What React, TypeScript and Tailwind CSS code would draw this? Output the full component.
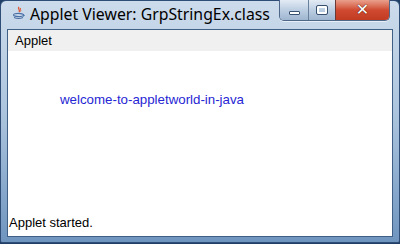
export default function App() {
  return (
    <div className="w-[400px] h-[244px] overflow-hidden bg-[#1f3f66]">
      <div className="w-[400px] h-[243px] flex flex-col rounded-t-[6px] rounded-b-[2px] border border-[#2f4d76] bg-gradient-to-b from-[#cddcec] via-[#a9c2dc] to-[#6f95bf]">
        {/* title bar */}
        <div className="h-[28px] flex items-start relative">
          <div className="ml-[11px] mt-[5px] w-[14px] h-[14px] flex items-center justify-center">
            <svg width="14" height="14" viewBox="0 0 14 14">
              <path d="M7 1 C5 3 9 4 7 6" stroke="#e0502a" strokeWidth="1.3" fill="none" />
              <path d="M8.5 2 C7.5 3.5 9.5 4 8.5 5.5" stroke="#e0502a" strokeWidth="1" fill="none" />
              <ellipse cx="6.5" cy="9" rx="5" ry="1.6" fill="none" stroke="#4a6fa5" strokeWidth="1.1" />
              <path d="M2 11.5 Q6.5 13.5 11 11.5" stroke="#4a6fa5" strokeWidth="1.1" fill="none" />
              <path d="M11 8.5 Q13.5 9 11.5 10.5" stroke="#4a6fa5" strokeWidth="1" fill="none" />
            </svg>
          </div>
          <div className="ml-[4px] mt-[2px] text-[15.8px] leading-[22px] text-black font-['Noto_Sans',sans-serif]">
            Applet Viewer: GrpStringEx.class
          </div>
          <div className="absolute right-[9px] top-[-1px] flex h-[21px] rounded-b-[5px] border border-[#4f6788] border-t-0 overflow-hidden shadow-[0_1px_0_#e6eef7]">
            <div className="w-[29px] h-full flex items-center justify-center bg-gradient-to-b from-[#e3ebf4] via-[#bccee2] to-[#9fb6d0] border-r border-[#6a819e]">
              <div className="mt-[6px] w-[11px] h-[4px] bg-white border border-[#37506f] rounded-[1px]" />
            </div>
            <div className="w-[27px] h-full flex items-center justify-center bg-gradient-to-b from-[#e3ebf4] via-[#bccee2] to-[#9fb6d0] border-r border-[#6a3a36]">
              <div className="w-[10px] h-[8px] border-2 border-white outline outline-1 outline-[#37506f] rounded-[1px]" />
            </div>
            <div className="w-[53px] h-full flex items-center justify-center bg-gradient-to-b from-[#e9a08d] via-[#cf4a31] to-[#c23a22]">
              <span className="text-white text-[16px] font-bold leading-none font-['DejaVu_Sans',sans-serif] [text-shadow:0_0_1px_#5a1b10,0_0_1px_#5a1b10]">
                ✕
              </span>
            </div>
          </div>
        </div>
        {/* client area */}
        <div className="mx-[6px] mb-[5px] flex-1 flex flex-col border border-[#3f5f86] bg-white font-['Liberation_Sans',Arial,sans-serif] text-[13px] text-black">
          <div className="h-[21px] bg-[#f0f0f0] flex items-center px-[7px] leading-none">
            Applet
          </div>
          <div className="flex-1 flex flex-col">
            <div className="pl-[52px] pt-[41px] text-[13.3px] text-[#2626d4] leading-[16px]">
              welcome-to-appletworld-in-java
            </div>
            <div className="mt-auto px-[1px] pb-[5px] leading-[16px]">Applet started.</div>
          </div>
        </div>
      </div>
    </div>
  );
}
